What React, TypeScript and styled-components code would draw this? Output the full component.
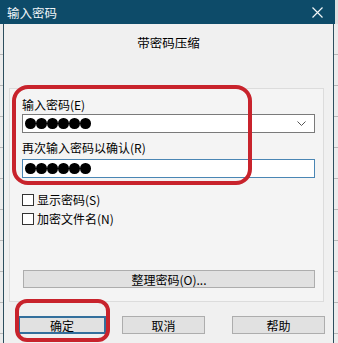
import React from 'react';
import styled, { createGlobalStyle } from 'styled-components';

const GlobalStyle = createGlobalStyle`
    html, body {
        margin: 0;
        padding: 0;
        background: #e6e6e6;
    }
    body {
        font-family: 'Noto Sans CJK SC', 'Noto Sans', sans-serif;
        font-size: 12px;
        color: #000;
    }
`;

const Screen = styled.div`
    position: relative;
    width: 338px;
    height: 343px;
    overflow: hidden;
    display: flex;
    flex-direction: column;
    background: #dedede;
`;

const TitleBar = styled.div`
    height: 24px;
    width: 335px;
    background: #0d4b69;
    color: #eef4f7;
    display: flex;
    align-items: center;
    justify-content: space-between;
    padding: 0 12px 0 7px;
    box-sizing: border-box;
    font-size: 12.5px;
`;

const Frame = styled.div`
    flex: 1;
    display: flex;
`;

const Backdrop = styled.div<{ $width: number }>`
    width: ${(p) => p.$width}px;
    background: repeating-linear-gradient(#ececec 0 30px, #b9b9b9 30px 31px);
`;

const Edge = styled.div`
    width: 1px;
    background: #2d4e5e;
`;

const Client = styled.div`
    width: 329px;
    background: #f0f0f0;
    display: flex;
    flex-direction: column;
`;

const Heading = styled.div`
    padding-top: 10px;
    line-height: 18px;
    text-align: center;
    font-size: 12.5px;
`;

const Group = styled.div`
    margin: 36px 9px 0 5px;
    height: 214px;
    box-sizing: border-box;
    border: 1px solid #dcdcdc;
    background: #f4f4f4;
    padding: 8px 8px 13px 12px;
    display: flex;
    flex-direction: column;
`;

const Label = styled.div<{ $gap: number }>`
    margin-top: ${(p) => p.$gap}px;
    line-height: 16px;
`;

const Field = styled.div<{ $focused?: boolean; $gap: number }>`
    margin-top: ${(p) => p.$gap}px;
    height: 19px;
    box-sizing: border-box;
    border: 1px solid ${(p) => (p.$focused ? '#4a86b4' : '#7a7a7a')};
    background: #fff;
    display: flex;
    align-items: center;
    padding: 0 8px 0 2px;
`;

const Dots = styled.div`
    display: flex;
    gap: 0.6px;
    flex: 1;
`;

const Dot = styled.span`
    width: 10.5px;
    height: 10.5px;
    border-radius: 50%;
    background: #000;
`;

const CheckRow = styled.label<{ $gap: number }>`
    margin-top: ${(p) => p.$gap}px;
    display: flex;
    align-items: center;
    gap: 3px;
    line-height: 16px;
`;

const Box = styled.span`
    width: 12px;
    height: 12px;
    box-sizing: border-box;
    border: 1px solid #333;
    background: #fff;
`;

const WideButton = styled.div`
    margin-top: auto;
    margin-left: 1px;
    height: 18px;
    box-sizing: border-box;
    border: 1px solid #adadad;
    background: #e1e1e1;
    display: flex;
    align-items: center;
    justify-content: center;
    font-size: 12px;
`;

const ButtonRow = styled.div`
    margin-top: 14px;
    padding-left: 14px;
    display: flex;
`;

const Button = styled.div<{ $width: number; $offset?: number; $default?: boolean }>`
    width: ${(p) => p.$width}px;
    margin-left: ${(p) => p.$offset ?? 0}px;
    height: 18px;
    box-sizing: border-box;
    border: ${(p) => (p.$default ? '2px solid #336f9c' : '1px solid #adadad')};
    background: #e1e1e1;
    display: flex;
    align-items: center;
    justify-content: center;
`;

const Mark = styled.div<{ $x: number; $y: number; $w: number; $h: number; $r: number }>`
    position: absolute;
    left: ${(p) => p.$x}px;
    top: ${(p) => p.$y}px;
    width: ${(p) => p.$w}px;
    height: ${(p) => p.$h}px;
    box-sizing: border-box;
    border: 4px solid #c8232c;
    border-radius: ${(p) => p.$r}px;
    pointer-events: none;
`;

const PasswordDots = () => (
    <Dots>
        {Array.from({ length: 6 }).map((_, i) => (
            <Dot key={i} />
        ))}
    </Dots>
);

const App: React.FC = () => {
    return (
        <>
            <GlobalStyle />
            <Screen>
                <TitleBar>
                    <span>输入密码</span>
                    <svg width="11" height="11" viewBox="0 0 11 11">
                        <path d="M0.5 0.5 L10.5 10.5 M10.5 0.5 L0.5 10.5" stroke="#f2f6f8" strokeWidth="1.2" />
                    </svg>
                </TitleBar>
                <Frame>
                    <Backdrop $width={3} />
                    <Edge />
                    <Client>
                        <Heading>带密码压缩</Heading>
                        <Group>
                            <Label $gap={0}>输入密码(E)</Label>
                            <Field $gap={1}>
                                <PasswordDots />
                                <svg width="9" height="6" viewBox="0 0 9 6">
                                    <path d="M0.5 0.5 L4.5 4.5 L8.5 0.5" stroke="#555" fill="none" />
                                </svg>
                            </Field>
                            <Label $gap={7}>再次输入密码以确认(R)</Label>
                            <Field $gap={3} $focused>
                                <PasswordDots />
                            </Field>
                            <CheckRow $gap={14}>
                                <Box />
                                显示密码(S)
                            </CheckRow>
                            <CheckRow $gap={3}>
                                <Box />
                                加密文件名(N)
                            </CheckRow>
                            <WideButton>整理密码(O)...</WideButton>
                        </Group>
                        <ButtonRow>
                            <Button $width={88} $default>
                                确定
                            </Button>
                            <Button $width={83} $offset={16}>
                                取消
                            </Button>
                            <Button $width={93} $offset={27}>
                                帮助
                            </Button>
                        </ButtonRow>
                    </Client>
                    <Edge />
                    <Backdrop $width={4} />
                </Frame>
                <Mark $x={12} $y={85} $w={240} $h={100} $r={16} />
                <Mark $x={15} $y={299} $w={95} $h={43} $r={12} />
            </Screen>
        </>
    );
};

export default App;
